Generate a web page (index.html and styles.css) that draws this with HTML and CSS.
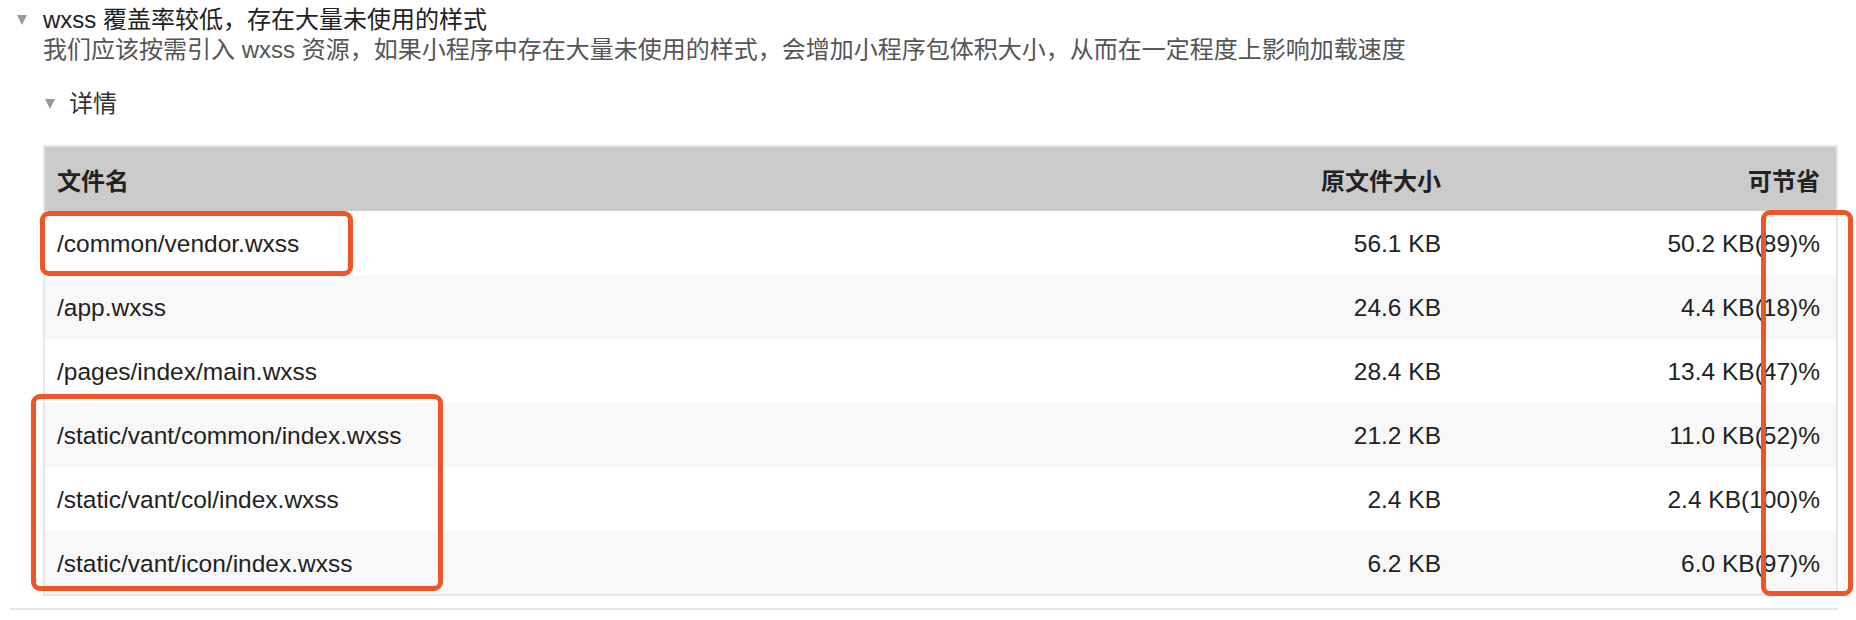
FILE: index.html
```html
<!DOCTYPE html>
<html lang="zh-CN">
<head>
<meta charset="utf-8">
<title>wxss 覆盖率</title>
<link rel="stylesheet" href="styles.css">
</head>
<body>
<div class="page">
  <section class="audit">
    <div class="audit-title">
      <span class="tri tri-lg"></span>
      <span class="title-text">wxss 覆盖率较低，存在大量未使用的样式</span>
    </div>
    <div class="audit-desc">我们应该按需引入 wxss 资源，如果小程序中存在大量未使用的样式，会增加小程序包体积大小，从而在一定程度上影响加载速度</div>
    <div class="details-head">
      <span class="tri tri-sm"></span>
      <span class="details-text">详情</span>
    </div>
    <table class="files">
      <colgroup>
        <col>
        <col class="c-size">
        <col class="c-save">
      </colgroup>
      <thead>
        <tr><th class="l">文件名</th><th class="r">原文件大小</th><th class="r">可节省</th></tr>
      </thead>
      <tbody>
        <tr><td>/common/vendor.wxss</td><td class="r">56.1 KB</td><td class="r">50.2 KB(89)%</td></tr>
        <tr><td>/app.wxss</td><td class="r">24.6 KB</td><td class="r">4.4 KB(18)%</td></tr>
        <tr><td>/pages/index/main.wxss</td><td class="r">28.4 KB</td><td class="r">13.4 KB(47)%</td></tr>
        <tr><td>/static/vant/common/index.wxss</td><td class="r">21.2 KB</td><td class="r">11.0 KB(52)%</td></tr>
        <tr><td>/static/vant/col/index.wxss</td><td class="r">2.4 KB</td><td class="r">2.4 KB(100)%</td></tr>
        <tr><td>/static/vant/icon/index.wxss</td><td class="r">6.2 KB</td><td class="r">6.0 KB(97)%</td></tr>
      </tbody>
    </table>
  </section>
  <section class="audit next">
    <div class="audit-title">
      <span class="title-text next-text">图片资源过大，建议压缩后使用</span>
    </div>
  </section>
  <div class="mark mark-vendor"></div>
  <div class="mark mark-vant"></div>
  <div class="mark mark-percent"></div>
</div>
</body>
</html>
```

FILE: styles.css
```css
* { box-sizing: border-box; }

html, body {
  margin: 0;
  padding: 0;
  background: #ffffff;
}

body {
  font-family: "Liberation Sans", "Noto Sans CJK SC", sans-serif;
  color: #222222;
}

.page {
  position: relative;
  width: 1856px;
  height: 620px;
  overflow: hidden;
}

.audit {
  margin-left: 10px;
  width: 1828px;
  padding: 5px 0 12px 7px;
  border-bottom: 2px solid #e6e6e6;
}

.audit.next {
  border-bottom: none;
  padding-top: 8px;
  padding-left: 40px;
}

.audit-title {
  display: flex;
  align-items: center;
  height: 30px;
}

.tri {
  display: inline-block;
  width: 0;
  height: 0;
  border-style: solid;
  border-color: #9a9a9a transparent transparent transparent;
}

.tri-lg {
  border-width: 10px 5px 0 5px;
  margin-right: 16px;
}

.tri-sm {
  border-width: 10px 5px 0 5px;
  margin-right: 14px;
}

.title-text {
  font-size: 24px;
  line-height: 30px;
  color: #222222;
}

.next-text {
  color: #444444;
}

.audit-desc {
  padding-left: 26px;
  font-size: 24px;
  line-height: 30px;
  color: #555555;
  white-space: nowrap;
}

.details-head {
  display: flex;
  align-items: center;
  margin-top: 24px;
  padding-left: 28px;
  height: 30px;
}

.details-text {
  font-size: 24px;
  line-height: 30px;
  color: #333333;
}

.files {
  margin-top: 26px;
  margin-left: 26px;
  width: 1795px;
  border-collapse: collapse;
  table-layout: fixed;
  border: 2px solid #e6e6e6;
  font-size: 24.5px;
}

.c-size { width: 300px; }
.c-save { width: 380px; }

.files th {
  height: 65px;
  background: #cbcbcb;
  font-weight: bold;
  font-size: 24px;
  color: #222222;
  padding: 0 16px 0 12px;
}

.files td {
  height: 64px;
  padding: 2px 16px 0 12px;
  color: #222222;
  white-space: nowrap;
}

.files tbody tr:nth-child(even) td {
  background: #f8f8f8;
}

.files .l { text-align: left; }
.files .r { text-align: right; }

.mark {
  position: absolute;
  border: 5px solid #ee5628;
  border-radius: 9px;
}

.mark-vendor {
  left: 40px;
  top: 211px;
  width: 313px;
  height: 65px;
}

.mark-vant {
  left: 31px;
  top: 394px;
  width: 412px;
  height: 197px;
}

.mark-percent {
  left: 1761px;
  top: 210px;
  width: 92px;
  height: 386px;
}
```
